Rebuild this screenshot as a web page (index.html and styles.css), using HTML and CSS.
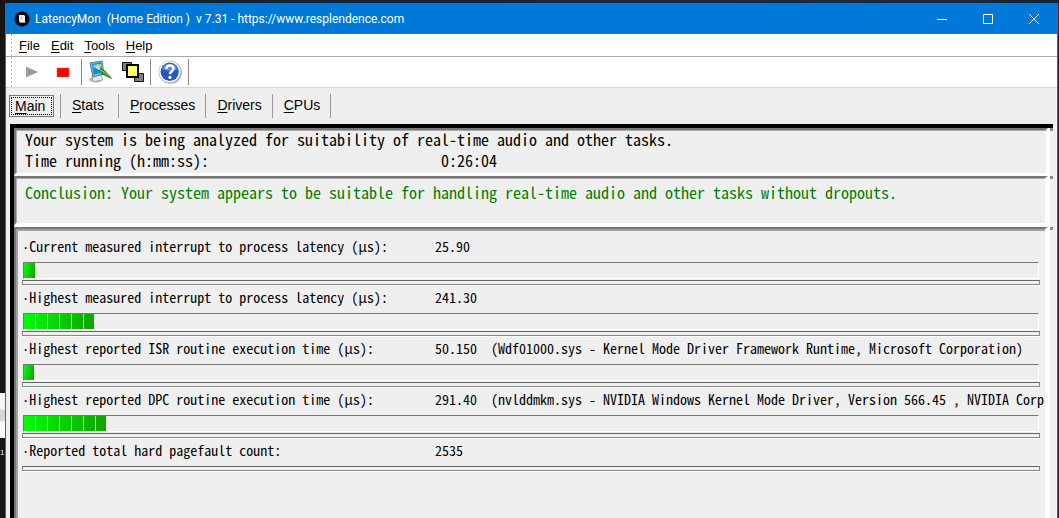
FILE: index.html
```html
<!DOCTYPE html>
<html lang="en">
<head>
<meta charset="utf-8">
<title>LatencyMon</title>
<link rel="stylesheet" href="styles.css">
</head>
<body>
<div class="backdrop"><div class="backdrop-pane"></div><span class="backdrop-text">1</span></div>
<div class="window">
  <header class="titlebar">
    <svg class="app-icon" viewBox="0 0 16 16"><circle cx="8" cy="8" r="7.6" fill="#05080c"/><path d="M5 4h5l1 1v6H6L5 10z" fill="#eef5f6"/><path d="M6.5 5.5h2v3h-2z" fill="#b6c4c8"/><path d="M5 10l1 2h6l-1-1H6z" fill="#9aa5a9"/></svg>
    <h1 class="title">LatencyMon&nbsp; (Home Edition )&nbsp; v 7.31 - https://www.resplendence.com</h1>
    <div class="caption-buttons">
      <button class="caption" aria-label="Minimize"><svg viewBox="0 0 12 12"><path d="M1 6.5h10"/></svg></button>
      <button class="caption" aria-label="Maximize"><svg viewBox="0 0 12 12"><path d="M1.500 1.500h9v9h-9z"/></svg></button>
      <button class="caption" aria-label="Close"><svg viewBox="0 0 12 12"><path d="M1 1l10 10M11 1L1 11"/></svg></button>
    </div>
  </header>
  <nav class="menu">
    <button><u>F</u>ile</button><button><u>E</u>dit</button><button><u>T</u>ools</button><button><u>H</u>elp</button>
  </nav>
  <div class="toolbar">
    <button class="tool" aria-label="Start"><svg viewBox="0 0 24 24"><path d="M7 6.500l12 5.500-12 5.500z" fill="#9a9a9a"/></svg></button>
    <button class="tool tool-stop" aria-label="Stop"><svg viewBox="0 0 24 24"><path d="M6 8h12v9H6z" fill="#f00" stroke="#c66" stroke-width=".6"/></svg></button>
    <span class="divider"></span>
    <button class="tool" aria-label="Options"><svg viewBox="0 0 24 24">
      <ellipse cx="8" cy="19.500" rx="7" ry="3" fill="#b4b4c6"/><path d="M4 15l9-1 1.500 6-9.500 1.500z" fill="#e8e8f2" stroke="#9696ab" stroke-width=".7"/>
      <path d="M2 3l12-2 2 13-11 3z" fill="#94b4c5" stroke="#467b9e"/><path d="M4 4l9-1.500 1.500 10-9 2z" fill="#0a8ee0"/><path d="M5 5l8-1 .5 3-8 1z" fill="#72cff5"/><path d="M7 6l3-2 3 2-2 3z" fill="#f4cf42"/>
      <path d="M11 8.500l6 2.500 6.500 7.500-9.500-4.500z" fill="#2f9b2b" stroke="#165f1c" stroke-width=".7"/><path d="M12 10l5 2.500 3 3" stroke="#8ade61" fill="none"/><path d="M8 7l4 2.500" stroke="#e8dfb1" stroke-width="2"/></svg></button>
    <button class="tool tool-windows" aria-label="Windows"><svg viewBox="0 0 24 24"><path d="M2.500 2.500h9v8h-9zM14.500 13.500h9v8h-9z" fill="#808080" stroke="#111"/><path d="M7 5h11v12H7z" fill="#ffff70" stroke="#000" stroke-width="2"/></svg></button>
    <span class="divider"></span>
    <button class="tool tool-help" aria-label="Help"><svg viewBox="0 0 24 24"><circle cx="12.500" cy="12.500" r="11.300" fill="#a8aaaf"/><circle cx="11.700" cy="11.700" r="10.900" fill="#fff" stroke="#9ba7b7" stroke-width=".6"/><circle cx="11.700" cy="11.700" r="9.200" fill="#2358bd"/><path d="M4 9a8 7 0 0 1 15.500 0q-7 4-15.500 0z" fill="#5e8cdc"/><path d="M8.300 9q.1-3.500 3.600-3.500T15.500 8.700c0 2.600-3.500 2.500-3.500 5.500" fill="none" stroke="#fff" stroke-width="2.400"/><circle cx="12" cy="17.300" r="1.600" fill="#fff"/></svg></button>
    <span class="divider"></span>
  </div>
  <nav class="tabs">
    <button class="tab tab-active"><u>M</u>ain</button><button class="tab"><u>S</u>tats</button><button class="tab"><u>P</u>rocesses</button><button class="tab"><u>D</u>rivers</button><button class="tab"><u>C</u>PUs</button>
  </nav>
  <main class="frame">
    <div class="panels">
      <section class="panel status">
        <p>Your system is being analyzed for suitability of real-time audio and other tasks.</p>
        <p class="pair"><span>Time running (h:mm:ss):</span><span>0:26:04</span></p>
      </section>
      <section class="panel conclusion"><p>Conclusion: Your system appears to be suitable for handling real-time audio and other tasks without dropouts.</p></section>
      <section class="panel metrics">
        <div class="metric"><p class="reading"><span id="m1"><b>·</b>Current measured interrupt to process latency (µs):</span><span>25.90</span></p>
          <div class="bar" role="meter" aria-labelledby="m1" aria-valuenow="25.9"><i class="fill" style="width:11px"></i></div><hr></div>
        <div class="metric"><p class="reading"><span id="m2"><b>·</b>Highest measured interrupt to process latency (µs):</span><span>241.30</span></p>
          <div class="bar" role="meter" aria-labelledby="m2" aria-valuenow="241.3"><i class="fill" style="width:70px"></i></div><hr></div>
        <div class="metric"><p class="reading"><span id="m3"><b>·</b>Highest reported ISR routine execution time (µs):</span><span>50.150</span><span>(Wdf01000.sys - Kernel Mode Driver Framework Runtime, Microsoft Corporation)</span></p>
          <div class="bar" role="meter" aria-labelledby="m3" aria-valuenow="50.15"><i class="fill" style="width:10px"></i></div><hr></div>
        <div class="metric"><p class="reading"><span id="m4"><b>·</b>Highest reported DPC routine execution time (µs):</span><span>291.40</span><span>(nvlddmkm.sys - NVIDIA Windows Kernel Mode Driver, Version 566.45 , NVIDIA Corp</span></p>
          <div class="bar" role="meter" aria-labelledby="m4" aria-valuenow="291.4"><i class="fill" style="width:82px"></i></div><hr></div>
        <div class="metric"><p class="reading"><span><b>·</b>Reported total hard pagefault count:</span><span>2535</span></p><hr></div>
      </section>
    </div>
    <div class="edge"><div class="edge-status"></div><div class="edge-conclusion"></div><div class="edge-metrics"></div></div>
  </main>
</div>
</body>
</html>
```
FILE: styles.css
```css
* { box-sizing: border-box; }
html, body { height: 100%; }
body {
  margin: 0;
  display: flex;
  overflow: hidden;
  background: linear-gradient(90deg, #141619, #172332 30%, #1d2a38 80%, #182431);
  color: #000;
  font-family: "Liberation Sans", Arial, sans-serif;
}
p, h1 { margin: 0; }
button { border: 0; background: none; padding: 0; font: inherit; color: inherit; }
u { text-underline-offset: 2px; }

.backdrop { width: 5px; padding-top: 393px; background: #181614; }
.backdrop-pane { height: 45px; background: linear-gradient(#f4f4f4 35%, #d5d5d5 40% 60%, #f8f8f8 65%); }
.backdrop-text { display: block; margin-top: 7px; color: #e2e6ec; font: 8px/16px "Liberation Sans", sans-serif; }

.window {
  flex: 1;
  min-width: 0;
  display: flex;
  flex-direction: column;
  margin: 3px 1px 0 0;
  border: solid #0c78d4;
  border-width: 0 1px;
  background: #efefef;
}

.titlebar { display: flex; align-items: center; height: 31px; padding-left: 8px; background: #0078d7; color: #fff; }
.app-icon { width: 16px; height: 16px; }
.title { flex: 1; margin-left: 5px; font: 12px Roboto, "Open Sans", sans-serif; white-space: nowrap; }
.caption-buttons { display: flex; }
.caption { display: grid; place-items: center; width: 46px; height: 30px; }
.caption svg { width: 12px; height: 12px; fill: none; stroke: #fff; }

.menu, .toolbar {
  display: flex;
  align-items: center;
  padding-left: 13px;
  background: #fff repeating-linear-gradient(#b9b4b4 0 2px, #fff 2px 4px) 5px 0 / 1px 100% no-repeat;
}
.menu { gap: 11px; height: 23px; border-bottom: 1px solid #a8a8a8; font-size: 13px; }
.toolbar { height: 31px; border-bottom: 1px solid #d6d6d6; }
.tool { width: 24px; height: 24px; }
.tool svg { display: block; width: 24px; height: 24px; }
.tool-stop { margin-left: 8px; }
.tool-windows { margin-left: 8px; }
.tool-help { margin-left: 1px; }
.divider { width: 1px; height: 26px; margin: 0 6px; background: #888; }

.tabs { display: flex; align-items: center; height: 36px; padding-left: 3px; font-size: 14px; line-height: 16px; }
.tab { min-width: 58px; height: 24px; padding: 0 10px 2px 11px; border-right: 1px solid #999; text-align: left; }
.tab-active { position: relative; min-width: 52px; padding-left: 6px; padding-bottom: 0; }
.tab-active::before { content: ""; position: absolute; inset: 1px 6px 1px 0; border: 1px solid #777; outline: 1px dotted #000; outline-offset: -3px; }

.frame { flex: 1; display: flex; margin: 0 4px; border: solid #000; border-width: 4px 0 0 4px; }
.panels { flex: 1; min-width: 0; display: flex; flex-direction: column; background: #fff; gap: 1px; }
.panel { border: solid; border-color: #777 #fff #fff #777; border-width: 2px; background: #efefef; }
.status, .conclusion { padding-left: 9px; font: 16px/18px "Noto Sans Mono CJK SC", "DejaVu Sans Mono", monospace; box-shadow: inset 1px 1px #aaa; }
.status { display: grid; align-content: start; gap: 3px; height: 47px; }
.pair { display: flex; }
.pair span:first-child { flex: 0 0 416px; }
.conclusion { height: 50px; padding-top: 5px; border-width: 2px 3px 3px 2px; color: #007f00; }
.metrics { flex: 1; border-width: 2px 3px 0 2px; padding: 8px 5px 0 6px; box-shadow: inset 2px 2px #a0a0a0; }
.metric { margin-bottom: 3px; }
.reading { display: flex; height: 20px; margin-bottom: 5px; font: 14px/18px "Noto Sans Mono CJK SC", "DejaVu Sans Mono", monospace; white-space: pre; }
.reading b { font: 12px/12px "DejaVu Sans Mono", monospace; }
.reading span:first-child { flex: 0 0 413px; }
.reading span:nth-child(2) { flex: 0 0 56px; }
.bar { height: 17px; margin: 0 1px 1px; border: 1px solid; border-color: #777 #fff #fff #777; }
.fill {
  display: block;
  height: 100%;
  background: repeating-linear-gradient(90deg, transparent 0 11px, #efefef 11px 12px), linear-gradient(100deg, #00ff0a, #12a000);
}
hr { height: 5px; margin: 0; border: 1px solid #888; border-top-color: #666; box-shadow: 0 1px #fff; }

.edge { display: flex; flex-direction: column; width: 5px; padding-left: 2px; background: linear-gradient(90deg, #fff 2px, #efefef 2px); }
.edge div { border-top: 3px solid #888; }
.edge-status { height: 48px; }
.edge-conclusion { height: 51px; }
```
